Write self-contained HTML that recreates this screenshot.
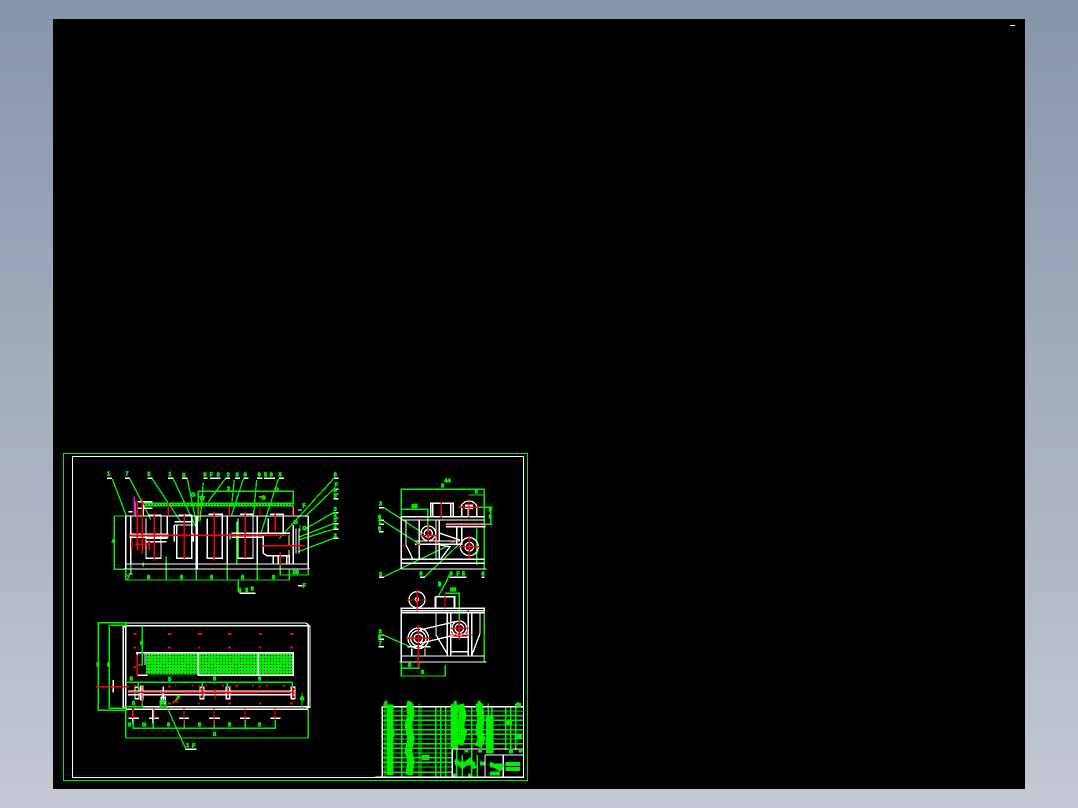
<!DOCTYPE html>
<html><head><meta charset="utf-8"><title>CAD drawing</title>
<style>
html,body{margin:0;padding:0;width:1078px;height:808px;overflow:hidden;background:linear-gradient(180deg,#8795aa 0%,#c3c8d2 100%)}
#v{position:absolute;left:53px;top:19px;width:972px;height:770px;background:#000}
svg{position:absolute;left:0;top:0}
text{font-family:"Liberation Sans",sans-serif;font-weight:bold;fill:#0e0;stroke:#0e0;stroke-width:2;font-size:17px}
.g{stroke:#0e0;fill:none;stroke-width:4}
.w{stroke:#fff;fill:none;stroke-width:4}
.r{stroke:#f00;fill:none;stroke-width:4}
</style></head><body>
<div id="v"></div>
<svg width="1078" height="808" viewBox="0 0 1078 808" shape-rendering="crispEdges">
<defs>
<pattern id="d" width="9" height="9" patternUnits="userSpaceOnUse"><rect width="9" height="9" fill="#0e0"/><rect width="3" height="3" fill="#000"/></pattern>
</defs>
<rect x="1010" y="25" width="5" height="1" fill="#fff"/>
<rect x="63.500" y="453.500" width="464" height="327" fill="none" stroke="#0e0" stroke-width="1.300"/>
<rect x="72.500" y="456.500" width="451" height="321" fill="none" stroke="#fff" stroke-width="1.300"/>

<!-- front view -->
<g transform="translate(60 450) scale(.33333)">
<rect x="250" y="158" width="450" height="12" fill="url(#d)"/>
<path class="g" d="M157 87L200 200M210 87L272 208M277 87L362 215M340 87L412 240M382 87L405 200L412 250M430 97L420 215M497 85L445 155M523 90L515 165M550 87L515 195M590 90L580 200M655 87L600 258M820 87L658 265M820 118L735 200M820 188L730 240M820 221L715 262M820 238L715 270M820 265L715 305"/>
<path class="g" d="M415 215V124H700V160M163 198H197M163 198V358H197M197 360V390H688V355M319 320V390M409 320V390M502 320V390M592 315V390M212 325V372M661 340V375H745V360M535 390V428M415 140H435M597 140H615M720 225V245M530 215L530 340M250 338V350"/>
<path class="w" d="M141 85H156M195 85H210M262 85H277M324 85H340M366 85H382M430 85H442M450 85H482M497 85H510M525 85H540M551 85H566M591 85H608M612 85H645M657 85H672M820 85H836M820 118H836M820 132H836M820 146H836M820 188H836M820 204H836M820 221H836M820 238H836M820 265H836M538 430H587M714 407H728M206 185H218M205 372H218M714 180H726"/>
<path class="w" d="M197 198V358M745 198V358M197 198H745M197 342H745M190 357H750M322 198V255M408 198V355M412 198V355M502 198V342M592 198V342M700 170V198M700 225V342M708 235V310M717 235V310"/>
<path class="w" d="M258 205V325H303V195H265M350 225V325H395V195H355M442 205V325H487V193H445M534 205V325H579V193H540M625 205V250H670V193H630M343 225V275M343 225H400M343 215H395M610 255V310L620 317H688M640 315V340M688 315V340M655 320V340M680 320V340M260 265H322M260 275H320M212 200V340M225 155V200M232 155H278M232 175H278M250 165V198M400 250V275M208 252H325M208 262H325M510 250V268M515 250H690M515 262H610"/>
<path class="r" d="M283 190V332M373 195V330M463 185V332M556 185V325M646 190V245M210 256H680M605 287H735M232 150V300M247 145V310M225 283H270M215 268V298M268 268V300M325 158V198M417 170V198M508 170V198M600 170V198M698 170V198M661 306V345"/>
<path d="M223 140V168M223 172V198" stroke="#f0f" stroke-width="4" fill="none"/>
<path d="M687 255V285M687 300V316" stroke="#ff0" stroke-width="3" fill="none"/>
<text x="141" y="77">1</text><text x="196" y="77">7</text><text x="262" y="78">5</text><text x="325" y="78">1</text><text x="367" y="81">5</text><text x="430" y="80">8</text><text x="449" y="79">F</text><text x="470" y="80">8</text><text x="500" y="80">3</text><text x="527" y="80">8</text><text x="551" y="79">8</text><text x="593" y="80">9</text><text x="612" y="80">5</text><text x="629" y="79">8</text><text x="656" y="80">5</text><text x="821" y="80">8</text><text x="824" y="109">F</text><text x="821" y="126">8</text><text x="821" y="143">8</text><text x="821" y="183">3</text><text x="821" y="199">2</text><text x="821" y="216">3</text><text x="821" y="234">2</text><text x="821" y="263">3</text>
<text x="200" y="388">7</text><text x="261" y="387">8</text><text x="360" y="387">8</text><text x="450" y="387">8</text><text x="543" y="387">8</text><text x="636" y="387">8</text><text x="698" y="372">88</text><text x="535" y="426">8</text><text x="555" y="426">3</text><text x="572" y="422">8</text><text x="155" y="279">4</text><text x="393" y="140">G</text><text x="420" y="152">G</text><text x="604" y="148">G</text><text x="644" y="124">G</text><text x="501" y="122">3</text><text x="727" y="172">F</text><text x="727" y="240">G</text><text x="700" y="222">G</text><text x="728" y="412">F</text>
</g>

<!-- plan view -->
<g transform="translate(60 610) scale(.33333)">
<rect x="258" y="128" width="442" height="66" fill="url(#d)"/>
<path class="w" d="M198 39H738L750 50V292H742V298H198V292H190V50H198ZM197 47H745V290H197ZM228 128H700V196H415V128M415 128V196M595 128V196M232 128V196H262M255 128V165M699 128V196M204 244H705M204 254H705M205 325H237M267 325H297M357 325H387M447 325H480M540 325H570M631 325H662M218 298V340M278 298V340M372 298V340M462 298V340M555 298V340M645 298V340M160 210V248M310 230V270M375 418H410"/>
<rect x="225" y="232" width="12" height="34" fill="none" stroke="#fff" stroke-width="4"/><rect x="240" y="226" width="10" height="45" fill="#fff"/><rect x="420" y="232" width="11" height="34" fill="none" stroke="#fff" stroke-width="4"/><rect x="499" y="232" width="10" height="34" fill="none" stroke="#fff" stroke-width="4"/><rect x="694" y="232" width="11" height="34" fill="none" stroke="#fff" stroke-width="4"/><rect x="304" y="262" width="12" height="20" fill="none" stroke="#fff" stroke-width="4"/>
<path class="g" d="M203 38H112M115 38V301H198M148 46V295H198M148 46H200M247 46V165H230M197 217H697V240M235 214V240M427 214V240M502 214V240M197 290H247V262M197 298V384H745V295M220 330V355H646V330M280 330V355M373 330V355M463 330V355M556 330V355M726 248V295M318 285L378 418M338 280L358 258"/>
<rect x="301" y="272" width="17" height="17" fill="none" stroke="#0e0" stroke-width="4"/>
<path class="r" d="M108 230H207M204 247H704M360 248H596M232 135V200M222 298H218V325M372 295V345M462 295V345M555 292V330M645 292V330M282 295V330M465 235V268M246 225V280M428 232V264M504 232V264M698 232V264"/>
<g class="r" style="stroke-width:6"><path d="M220 72H230M324 72H334M414 72H426M504 72H514M597 72H606M690 72H700M220 113H228M324 113H333M415 113H420M504 113H513M597 113H604M690 113H699M220 171H228M324 229H333M416 229H421M526 227H534M576 227H582M597 229H603M668 227H675M220 228H228M345 227H350M394 227H401M436 227H441M486 227H492M506 229H513M618 227H624M324 281H333M415 281H420M504 281H513M597 281H604M690 281H699M340 275H355"/></g>
<text x="109" y="170">5</text><text x="141" y="170">8</text><text x="240" y="105">8</text><text x="209" y="212">8</text><text x="324" y="213">8</text><text x="459" y="212">8</text><text x="594" y="212">8</text><text x="216" y="285">8</text><text x="204" y="350">8</text><text x="246" y="350">G</text><text x="321" y="350">8</text><text x="414" y="350">8</text><text x="504" y="350">8</text><text x="594" y="350">8</text><text x="459" y="378">8</text><text x="378" y="411">1</text><text x="396" y="412">F</text><text x="720" y="271">G</text><text x="350" y="268">F</text><text x="304" y="282">8</text>
</g>

<!-- side view 1 -->
<g transform="translate(360 465) scale(.33333)">
<path class="g" d="M124 155V73H373V178H360M124 133H203V200M325 90H373M355 127H398M355 178H398M392 127V178M60 128H72L190 205M70 168L175 235M72 335L265 242M195 335L300 235M350 190V300M373 178V310M270 325L255 358"/>
<path class="w" d="M124 155H373M124 165H373M124 155V312M124 283H373M124 295H373M124 312H380M57 128H72M57 166H72M57 178H72M57 200H70M57 337H72M180 337H195M268 337H320M364 337H374M138 165V240L160 285M178 165V285M228 165V285M238 165V285M165 228H300M165 238H300M258 178H375V185H258M290 185V240M305 185V240M240 205L300 225M240 240L270 245L240 285M212 155V115H280V155M218 115V155M272 115V155"/>
<circle cx="205" cy="205" r="22" class="w"/><circle cx="205" cy="205" r="12" class="w"/>
<circle cx="328" cy="245" r="27" class="w"/><circle cx="328" cy="245" r="13" class="w"/>
<path class="w" d="M302 127A26 26 0 0 1 352 127M325 127V155M305 127V155M350 127V155"/>
<rect x="315" y="118" width="24" height="14" fill="#fff"/>
<path class="r" d="M244 112V158M295 127H355M327 100V158M180 212H232M205 180V230M170 238H180M228 232H240M272 232H285M300 245H358M328 212V280M255 180H380M125 240H132M172 158H178"/>
<text x="57" y="122">3</text><text x="54" y="162">8</text><text x="54" y="178">7</text><text x="54" y="196">8</text><text x="57" y="333">3</text><text x="178" y="332">8</text><text x="269" y="332">3</text><text x="289" y="332">F</text><text x="306" y="332">5</text><text x="364" y="332">6</text><text x="154" y="129">88</text><text x="344" y="86">8</text><text x="253" y="52">44</text><text x="243" y="68">8</text><text x="386" y="140">8</text><text x="386" y="160">8</text><text x="234" y="362">8</text>
</g>

<!-- side view 2 -->
<g transform="translate(360 580) scale(.33333)">
<path class="g" d="M262 0L233 52M255 40H298V125M70 165L145 198M124 245V265H176V245M124 265V288H256V255M373 88V248"/>
<path class="w" d="M124 85H373V92H124ZM124 98H373M124 92V246M124 228H373M118 246H380M228 85V50H285V85M226 50V85M283 50V85M228 98V165L262 222M262 98V228M272 98V228M325 98V228M335 98V228L360 160V100M272 162H325M272 172H325M272 215H325M180 150L285 125M180 190L285 165M142 200H212M155 205V228M195 205V228M55 165H72M55 178H72M55 200H72"/>
<circle cx="171" cy="59" r="24" class="w"/><circle cx="171" cy="59" r="5" class="w"/>
<circle cx="175" cy="175" r="31" class="w"/><circle cx="175" cy="175" r="23" class="w"/><circle cx="175" cy="175" r="13" class="w"/>
<circle cx="298" cy="145" r="22" class="w"/><circle cx="298" cy="145" r="13" class="w"/>
<path class="r" d="M141 60H203M172 28V92M138 175H212M175 135V262M272 145H325M298 120V180M265 165H338M255 42V85M325 90V96M372 173H378"/>
<text x="56" y="161">3</text><text x="54" y="177">8</text><text x="56" y="195">7</text><text x="144" y="261">8</text><text x="183" y="282">8</text><text x="234" y="20">8</text><text x="270" y="35">88</text>
</g>

<!-- title block -->
<g transform="translate(375 695) scale(.33333)">
<path class="g" d="M22 48H445M22 62H445M22 76H445M22 90H445M22 104H445M22 118H445M22 132H445M22 146H445M22 160H232M22 174H232M22 188H232M22 202H232M22 216H232M22 232H232M30 25V247M80 35V247M132 25V247M138 35V247M182 35V247M197 35V247M212 35V247M232 25V162M245 35V247M262 180V247M290 35V247M307 180V247M340 25V175M350 35V175M392 35V165M407 35V165M422 25V165"/>
<path class="w" d="M22 35H445M22 35V247M0 247H445M232 162H445M232 162V247M330 180H445M330 180V247M385 180V247"/>
<g fill="none" stroke="#0e0" style="stroke-width:22">
<path d="M45 28V240M52 80H56M52 115H58M50 150H56M50 205H56"/>
<path d="M104 28L108 60L100 90L108 130L100 170L108 200L102 240"/>
<path d="M238 28V160M256 28L264 60L254 100L265 110L254 150"/>
<path d="M312 25L318 70L312 110L320 130L310 155"/>
<path d="M344 60V175M400 75V90M430 118V130M152 180V195"/>
</g>
<g fill="none" stroke="#0e0" style="stroke-width:12">
<path d="M25 30H32M100 27H112M235 30H243M428 30H438M275 165V172M315 165V172M408 160V175M436 165V172M240 205H270M275 205H300M345 212H385M345 235H375M392 207H435M392 222H435M285 235V245M240 235V245M315 205H328M240 195L262 215L285 195L300 220M345 205L380 225"/>
</g>
<text x="28" y="30">8</text><text x="96" y="30">8</text><text x="236" y="30">8</text><text x="308" y="30">8</text><text x="424" y="34">8</text>
</g>
</svg>
</body></html>
